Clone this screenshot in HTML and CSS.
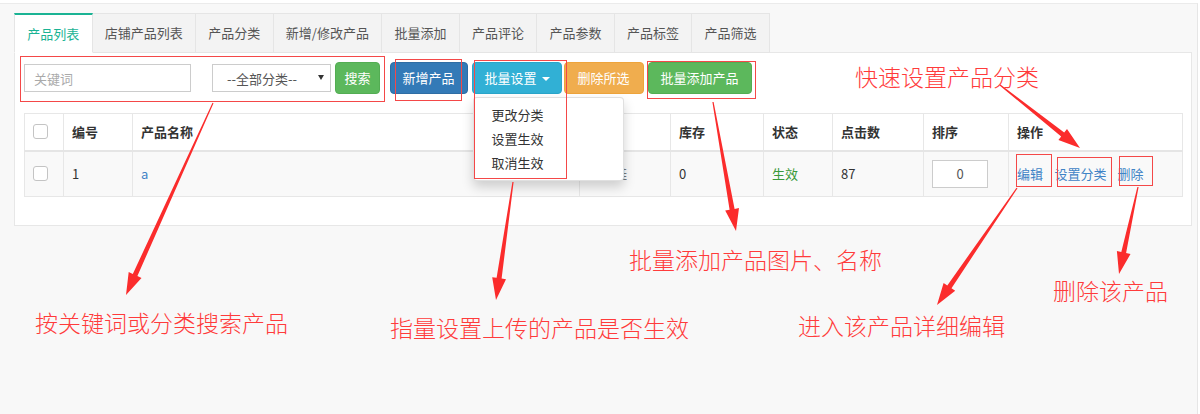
FILE: index.html
```html
<!DOCTYPE html>
<html lang="zh-CN">
<head>
<meta charset="utf-8">
<title>产品列表</title>
<link rel="stylesheet" href="styles.css">
</head>
<body>
<div class="frame">
  <ul class="tabs">
    <li class="tab active">产品列表</li>
    <li class="tab">店铺产品列表</li>
    <li class="tab">产品分类</li>
    <li class="tab">新增/修改产品</li>
    <li class="tab">批量添加</li>
    <li class="tab">产品评论</li>
    <li class="tab">产品参数</li>
    <li class="tab">产品标签</li>
    <li class="tab">产品筛选</li>
  </ul>
  <div class="panel">
    <div class="toolbar">
      <input class="kw" type="text" placeholder="关键词">
      <div class="select-wrap">
        <select class="cat"><option>--全部分类--</option></select>
        <span class="select-caret"></span>
      </div>
      <button class="btn btn-green btn-search">搜索</button>
      <button class="btn btn-blue btn-add">新增产品</button>
      <div class="btn-group">
        <button class="btn btn-cyan">批量设置<span class="caret"></span></button>
        <ul class="dropdown">
          <li>更改分类</li>
          <li>设置生效</li>
          <li>取消生效</li>
        </ul>
      </div>
      <button class="btn btn-orange btn-del">删除所选</button>
      <button class="btn btn-green btn-bulk">批量添加产品</button>
    </div>
    <table class="grid">
      <colgroup>
        <col class="c-check"><col class="c-id"><col class="c-name"><col class="c-cat">
        <col class="c-stock"><col class="c-state"><col class="c-hits"><col class="c-sort"><col class="c-ops">
      </colgroup>
      <thead>
        <tr>
          <th><span class="check"></span></th>
          <th>编号</th>
          <th>产品名称</th>
          <th>分类</th>
          <th>库存</th>
          <th>状态</th>
          <th>点击数</th>
          <th>排序</th>
          <th>操作</th>
        </tr>
      </thead>
      <tbody>
        <tr>
          <td><span class="check"></span></td>
          <td>1</td>
          <td><a class="link">a</a></td>
          <td class="muted">运动鞋</td>
          <td>0</td>
          <td class="on">生效</td>
          <td>87</td>
          <td><input class="sort" type="text" value="0"></td>
          <td class="ops"><a class="link">编辑</a><a class="link">设置分类</a><a class="link">删除</a></td>
        </tr>
      </tbody>
    </table>
  </div>
</div>

<div class="notes">
  <svg class="marks" width="1200" height="414" viewBox="0 0 1200 414">
    <g class="boxes">
      <rect x="20.5" y="56.5" width="364" height="45"/>
      <rect x="395.5" y="59.5" width="66" height="41"/>
      <rect x="474.5" y="60.5" width="92" height="118"/>
      <rect x="647.5" y="61.5" width="108" height="37"/>
      <rect x="1016.5" y="154.5" width="35" height="32"/>
      <rect x="1057.5" y="157.5" width="54" height="29"/>
      <rect x="1119.5" y="156.5" width="33" height="29"/>
    </g>
    <g class="arrows">
      <polygon points="213.5,103.2 137.4,276 141.5,277.9 126,295 128.7,272.1 132.8,274 212.5,102.8"/>
      <polygon points="513.6,182.1 501.6,278.6 506,279.2 496,300 492.2,277.2 496.6,277.8 512.4,181.9"/>
      <polygon points="713.6,101.9 734.6,208.9 739,208.1 736,231 725.2,210.5 729.6,209.7 712.4,102.1"/>
      <polygon points="1000.4,84.5 1064.2,132.4 1067,128.9 1080,148 1058.4,139.9 1061.2,136.4 999.6,85.5"/>
      <polygon points="1017.5,188.3 951.5,288.2 955.2,290.8 937,305 943.6,282.9 947.3,285.4 1016.5,187.7"/>
      <polygon points="1138.6,187.1 1126.1,253 1130.5,254 1119,274 1116.9,251 1121.3,252 1137.4,186.9"/>
    </g>
  </svg>
  <div class="note n-quick">快速设置产品分类</div>
  <div class="note n-bulk">批量添加产品图片、名称</div>
  <div class="note n-del">删除该产品</div>
  <div class="note n-search">按关键词或分类搜索产品</div>
  <div class="note n-state">指量设置上传的产品是否生效</div>
  <div class="note n-edit">进入该产品详细编辑</div>
</div>
</body>
</html>
```

FILE: styles.css
```css
* { box-sizing: border-box; }

html, body { margin: 0; }

body {
  position: relative;
  width: 1200px;
  height: 414px;
  overflow: hidden;
  background: #fff;
  font-family: "Noto Sans CJK SC", "Noto Sans", sans-serif;
  font-size: 13px;
  color: #333;
}

/* page frame */
.frame {
  margin: 3px 2px 0 0;
  height: 411px;
  border-top: 1px solid #ebebeb;
  border-right: 1px solid #e6e6e6;
  background: #f8f8f8;
  padding: 9px 5px 0 14px;
}

/* tabs */
.tabs {
  position: relative;
  z-index: 1;
  display: flex;
  list-style: none;
  margin: 0 0 -1px;
  padding: 0;
}

.tab {
  height: 40px;
  line-height: 38px;
  padding: 0 12.25px;
  border: 1px solid #e5e5e5;
  border-left: none;
  background: #f3f3f3;
  color: #555;
  white-space: nowrap;
}

.tab:first-child { border-left: 1px solid #e5e5e5; }

.tab.active {
  background: #fff;
  color: #1ab394;
  border-top: 2px solid #1ab394;
  border-bottom-color: #fff;
  line-height: 37px;
}

/* content panel */
.panel {
  background: #fff;
  border: 1px solid #e7e7e7;
  padding: 9px 9px 28px;
}

.toolbar {
  display: flex;
  align-items: center;
  height: 32px;
}

.kw {
  width: 167px;
  height: 28px;
  border: 1px solid #ccc;
  padding: 0 9px;
  font: inherit;
  color: #555;
  outline: none;
}

.kw::placeholder { color: #aaa; }

.select-wrap {
  position: relative;
  margin-left: 21px;
}

.cat {
  display: block;
  appearance: none;
  -webkit-appearance: none;
  width: 119px;
  height: 28px;
  border: 1px solid #ccc;
  border-radius: 0;
  background: #fff;
  padding: 0 0 0 14px;
  font: inherit;
  color: #555;
}

.select-caret {
  position: absolute;
  right: 7px;
  top: 11px;
  border-left: 3px solid transparent;
  border-right: 3px solid transparent;
  border-top: 5px solid #333;
}

.btn {
  height: 32px;
  border: 1px solid transparent;
  border-radius: 4px;
  padding: 0 12px;
  font: inherit;
  line-height: 30px;
  color: #fff;
  white-space: nowrap;
}

.btn-green { background: #5cb85c; border-color: #53ad53; }
.btn-blue { background: #337ab7; border-color: #2e6da4; }
.btn-cyan { background: #31b0d5; border-color: #2aa6ca; }
.btn-orange { background: #f0ad4e; border-color: #eea43b; }

.btn-search { margin-left: 4px; padding: 0 8.5px; }
.btn-add { margin-left: 9.5px; }
.btn-group { position: relative; margin-left: 4px; }
.btn-group .btn { padding: 0 11px 0 12px; }
.btn-del { margin-left: 2px; padding: 0 13px; }
.btn-bulk { margin-left: 4px; }

.caret {
  display: inline-block;
  margin-left: 5px;
  vertical-align: middle;
  border-left: 4px solid transparent;
  border-right: 4px solid transparent;
  border-top: 4px solid #fff;
}

.dropdown {
  position: absolute;
  z-index: 5;
  top: 35px;
  left: 1px;
  width: 151px;
  list-style: none;
  margin: 0;
  padding: 5px 0;
  background: #fff;
  border: 1px solid rgba(0, 0, 0, 0.12);
  border-radius: 4px;
  box-shadow: 0 6px 12px rgba(0, 0, 0, 0.175);
}

.dropdown li {
  line-height: 24px;
  padding: 0 18px;
  color: #333;
  white-space: nowrap;
}

/* product table */
.grid {
  width: 1158px;
  margin-top: 19px;
  table-layout: fixed;
  border-collapse: collapse;
}

.c-check { width: 39px; }
.c-id { width: 69px; }
.c-name { width: 447px; }
.c-cat { width: 91px; }
.c-stock { width: 93px; }
.c-state { width: 69px; }
.c-hits { width: 91px; }
.c-sort { width: 85px; }
.c-ops { width: 174px; }

.grid th,
.grid td {
  border: 1px solid #e7e7e7;
  padding: 0 8px;
  text-align: left;
  white-space: nowrap;
}

.grid th {
  height: 37px;
  font-weight: bold;
  background: #fff;
}

.grid thead th { border-bottom: 2px solid #e5e5e5; }

.grid td {
  height: 46px;
  background: #f9f9f9;
}

.check {
  display: block;
  width: 15px;
  height: 15px;
  border: 1px solid #c4c4c4;
  border-radius: 3px;
  background: #fff;
}

.link {
  color: #3f83c6;
  text-decoration: none;
}

.muted { color: #777; }

.on { color: #3a9a3a; }

.sort {
  display: block;
  width: 56px;
  height: 28px;
  border: 1px solid #ccc;
  font: inherit;
  color: #555;
  text-align: center;
}

.ops .link + .link { margin-left: 11px; }
.ops .link:nth-child(2) { margin-left: 11.5px; }

/* callouts */
.notes {
  position: absolute;
  left: 0;
  top: 0;
  width: 1200px;
  height: 414px;
  pointer-events: none;
  z-index: 10;
}

.marks { position: absolute; left: 0; top: 0; }

.boxes rect {
  fill: none;
  stroke: #f44848;
  stroke-width: 1;
}

.arrows polygon { fill: #fb2c2c; }

.note {
  position: absolute;
  font-size: 23px;
  font-weight: 300;
  line-height: 23px;
  color: #ff3b3b;
  white-space: nowrap;
}

.n-quick { left: 855px; top: 65px; }
.n-bulk { left: 629px; top: 248px; }
.n-del { left: 1053px; top: 279px; }
.n-search { left: 35px; top: 311px; }
.n-state { left: 390px; top: 316px; }
.n-edit { left: 798px; top: 314px; }
```
